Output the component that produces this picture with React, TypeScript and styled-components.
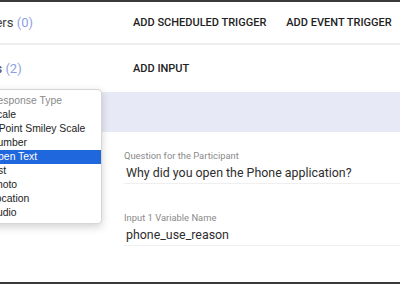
import styled, { createGlobalStyle } from 'styled-components';

const GlobalStyle = createGlobalStyle`
  html, body {
    margin: 0;
    padding: 0;
    background: #fff;
  }
  body {
    font-family: Roboto, 'Liberation Sans', sans-serif;
  }
`;

const Viewport = styled.div`
  position: relative;
  width: 400px;
  height: 284px;
  overflow: hidden;
  background: #fff;
  border-top: 2px solid #3a3a3c;
  border-bottom: 2px solid #3a3a3c;
  box-sizing: border-box;
`;

const Page = styled.div`
  margin-left: -34px;
  display: flex;
  flex-direction: column;
`;

const SectionRow = styled.div<{ $height: number; $divider?: boolean }>`
  display: grid;
  grid-template-columns: 159px 1fr;
  align-items: center;
  height: ${(p) => p.$height}px;
  border-bottom: ${(p) => (p.$divider ? '2px solid #efefef' : 'none')};
`;

const SectionTitle = styled.h3`
  margin: 0;
  font-size: 13px;
  font-weight: 400;
  color: #3c3c3c;
  white-space: nowrap;

  span {
    color: #8f9fe2;
  }
`;

const Actions = styled.div`
  display: flex;
  gap: 4px;
`;

const ActionButton = styled.button`
  background: none;
  border: none;
  margin: 0;
  padding: 6px 8px;
  cursor: pointer;
  white-space: nowrap;
  font-family: Roboto, 'Liberation Sans', sans-serif;
  font-size: 11px;
  font-weight: 500;
  color: #222;
  text-transform: uppercase;
`;

const CardHeader = styled.div`
  height: 40px;
  background: #e8e9f6;
`;

const CardBody = styled.div`
  display: flex;
  flex-direction: column;
  gap: 27px;
  padding: 17px 0 0 158px;
`;

const Field = styled.div`
  display: flex;
  flex-direction: column;
`;

const FieldLabel = styled.label`
  font-size: 9.4px;
  line-height: 13px;
  color: #8a8a8a;
`;

const FieldValue = styled.div`
  font-size: 12.4px;
  line-height: 21px;
  color: #2e2e2e;
  padding-left: 2px;
  border-bottom: 1px solid #efefef;
  white-space: nowrap;
`;

const Dropdown = styled.ul`
  position: absolute;
  left: -15px;
  top: 87px;
  width: 115px;
  margin: 0;
  padding: 4px 0 3px;
  list-style: none;
  background: #fff;
  border: 1px solid #d6d6d6;
  border-radius: 4px;
  box-shadow: 0 3px 8px rgba(0, 0, 0, 0.18);
  font-family: 'Liberation Sans', Arial, sans-serif;
  font-size: 10.4px;
`;

const Option = styled.li<{ $header?: boolean; $selected?: boolean }>`
  height: 14px;
  line-height: 14px;
  padding-left: 4px;
  color: ${(p) => (p.$header ? '#8a8a8a' : p.$selected ? '#fff' : '#222')};
  background: ${(p) => (p.$selected ? '#1f67dc' : 'transparent')};
  white-space: nowrap;
`;

const options = [
  'Scale',
  '5 Point Smiley Scale',
  'Number',
  'Open Text',
  'List',
  'Photo',
  'Location',
  'Audio',
];

export default function App() {
  return (
    <>
      <GlobalStyle />
      <Viewport>
        <Page>
          <SectionRow $height={41} $divider>
            <SectionTitle>
              Triggers <span>(0)</span>
            </SectionTitle>
            <Actions>
              <ActionButton type='button'>Add Scheduled Trigger</ActionButton>
              <ActionButton type='button'>Add Event Trigger</ActionButton>
            </Actions>
          </SectionRow>
          <SectionRow $height={47}>
            <SectionTitle>
              Inputs <span>(2)</span>
            </SectionTitle>
            <Actions>
              <ActionButton type='button'>Add Input</ActionButton>
            </Actions>
          </SectionRow>
          <CardHeader />
          <CardBody>
            <Field>
              <FieldLabel>Question for the Participant</FieldLabel>
              <FieldValue>Why did you open the Phone application?</FieldValue>
            </Field>
            <Field>
              <FieldLabel>Input 1 Variable Name</FieldLabel>
              <FieldValue>phone_use_reason</FieldValue>
            </Field>
          </CardBody>
        </Page>
        <Dropdown>
          <Option $header>Response Type</Option>
          {options.map((o) => (
            <Option key={o} $selected={o === 'Open Text'}>
              {o}
            </Option>
          ))}
        </Dropdown>
      </Viewport>
    </>
  );
}
